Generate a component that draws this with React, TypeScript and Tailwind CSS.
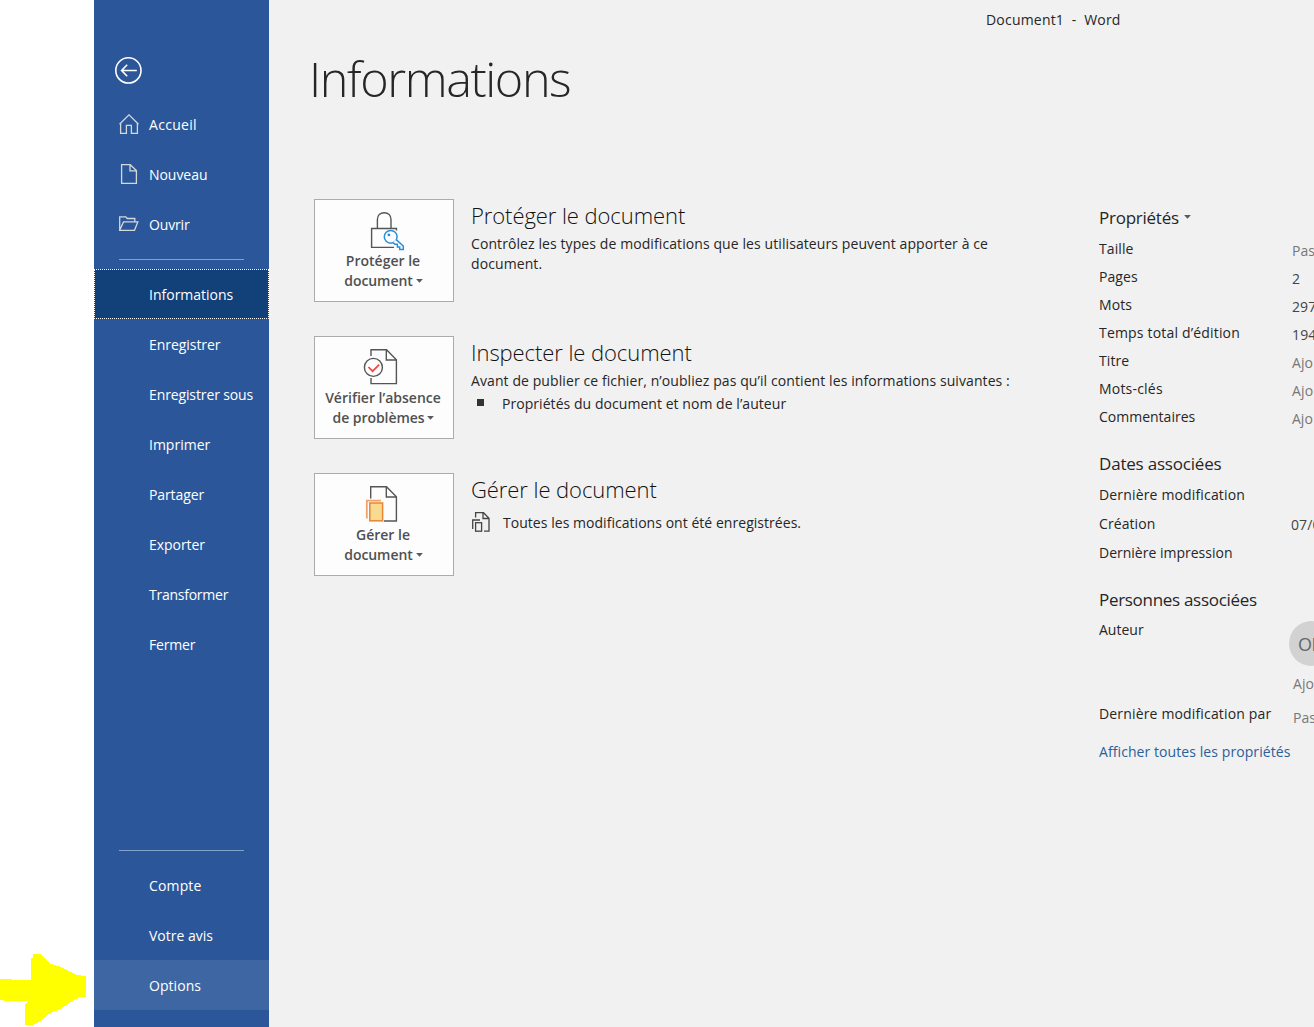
import type { ReactNode } from 'react';

function Caret({ className = '' }: { className?: string }) {
  return (
    <svg width="7" height="4" viewBox="0 0 7 4" className={`inline-block ${className}`}>
      <path d="M0.1 0.1H6.9L3.5 3.7Z" fill="#5a5a5a" />
    </svg>
  );
}

function BackIcon() {
  return (
    <svg width="28" height="28" viewBox="0 0 28 28" fill="none" stroke="#fff" strokeWidth="1.6">
      <circle cx="14.4" cy="14.4" r="12.6" />
      <path d="M22.8 14.5H7.4M13.2 8.7L7.6 14.5L13.2 20.3" />
    </svg>
  );
}

function HomeIcon() {
  return (
    <svg width="20" height="20" viewBox="0 0 20 20" fill="none" stroke="#d4d7dc" strokeWidth="1.3">
      <path d="M0.5 10.3L10 0.9L19.5 10.3M1.6 9.5V19.3H7.4V11.4H12.4V19.3H18.4V9.5" />
    </svg>
  );
}

function NewIcon() {
  return (
    <svg width="20" height="20" viewBox="0 0 20 20" fill="none" stroke="#d4d7dc" strokeWidth="1.3">
      <path d="M2.6 0.7H11.2L17.4 6.6V19.3H2.6ZM11 0.7V6.8H17.4" />
    </svg>
  );
}

function OpenIcon() {
  return (
    <svg width="20" height="20" viewBox="0 0 20 20" fill="none" stroke="#d4d7dc" strokeWidth="1.3">
      <path d="M0.7 16.3V2.8H6.8L8.2 4.5H15.8V7.8M0.7 16.3L4.5 7.9H18.8L15.5 16.3Z" />
    </svg>
  );
}

function LockIcon() {
  return (
    <svg width="44" height="41" viewBox="0 0 44 41" fill="none" stroke="#555" strokeWidth="1.4">
      <path d="M15.4 18V9.6C15.4 5.4 18.2 2.7 22.2 2.7S29 5.4 29 9.6V18" />
      <path d="M34.5 20.5V18.5H9.6V37.4H32" />
      <g stroke="#2a8fd4" strokeWidth="1.5">
        <circle cx="28.7" cy="26.8" r="6.4" fill="#fdfdfd" />
        <path d="M34.2 29.6L41.3 36V39.4H37.7V36.9H35.4V34.3H32.9L31 32.6" fill="#fdfdfd" />
      </g>
      <circle cx="26.9" cy="24.9" r="1.4" fill="#2a8fd4" stroke="none" />
    </svg>
  );
}

function CheckDocIcon() {
  return (
    <svg width="44" height="41" viewBox="0 0 44 41" fill="none" stroke="#555" strokeWidth="1.4">
      <path d="M9 9V2.8H24.5L34.4 12.8V36.6H9V31M24.3 2.8V13H34.4" />
      <circle cx="11.4" cy="20.4" r="9" fill="#fdfdfd" />
      <path d="M6.4 20L10.6 24.2L17.2 17.6" stroke="#f04747" strokeWidth="1.7" />
    </svg>
  );
}

function ManageDocIcon() {
  return (
    <svg width="44" height="41" viewBox="0 0 44 41" fill="none" stroke="#555" strokeWidth="1.4">
      <path d="M8.7 14.5V2.7H24.5L34.4 12.8V37H22M24.3 2.7V13H34.4" />
      <path d="M19 16.7H4.8V34.6" stroke="#f0a268" strokeWidth="1.8" />
      <rect x="7.8" y="19" width="12.8" height="17.8" fill="#f8da90" stroke="#ed8a3a" strokeWidth="1.6" />
    </svg>
  );
}

function SavedIcon() {
  return (
    <svg width="18" height="20" viewBox="0 0 18 20" fill="none" stroke="#444" strokeWidth="1.3">
      <path d="M3.6 5.5V0.7H11.5L17 6.2V19.2H12M11 0.7V6.5H17M8 8H0.7V17" />
      <rect x="3.6" y="10.7" width="6" height="8.5" />
    </svg>
  );
}

function YellowArrow() {
  return (
    <svg width="86" height="71" viewBox="0 372 258 213" preserveAspectRatio="none" shapeRendering="crispEdges">
      <path
        d="M0 447H36V450H94V384H99V372H122L152 401L190 414L230 435L258 438V500L235 502L215 515L180 537L150 550L118 575L100 584H75V522L84 514H12V510H0Z"
        fill="#ff0"
      />
    </svg>
  );
}

function NavItem({
  label,
  icon,
  className = '',
  tracking = 'tracking-[-0.05px]',
}: {
  label: string;
  icon?: ReactNode;
  className?: string;
  tracking?: string;
}) {
  return (
    <button className={`flex h-[50px] w-full shrink-0 items-center pl-[25px] text-left text-white ${className}`}>
      <span className="w-[30px] shrink-0 pb-0.5">{icon}</span>
      <span className={`whitespace-nowrap ${icon ? '' : 'pt-px'} ${tracking}`}>{label}</span>
    </button>
  );
}

function ActionButton({ icon, first, second }: { icon: ReactNode; first: string; second: string }) {
  return (
    <button className="flex h-[103px] w-[140px] shrink-0 flex-col items-center border border-[#ababab] bg-[#fdfdfd] pt-[10px] font-semibold leading-5 whitespace-nowrap text-[#505050]">
      {icon}
      <span className="-ml-0.5">{first}</span>
      <span className="-ml-px tracking-[-0.06px]">
        {second}
        <Caret className="ml-[3px] align-[3px]" />
      </span>
    </button>
  );
}

function Section({ button, title, children }: { button: ReactNode; title: string; children: ReactNode }) {
  return (
    <section className="flex h-[137px] gap-[17px]">
      {button}
      <div className="min-w-0 tracking-[0.09px]">
        <h2 className="h-[35px] text-[22px] leading-[32px] font-light tracking-[-0.07px] whitespace-nowrap text-[#111]">
          {title}
        </h2>
        {children}
      </div>
    </section>
  );
}

function Row({
  label,
  value,
  height,
  tone = 'text-[#444]',
}: {
  label: string;
  value?: string;
  height: string;
  tone?: string;
}) {
  return (
    <div className={`flex whitespace-nowrap ${height}`}>
      <span className="w-[193px] shrink-0">{label}</span>
      <span className={`pt-0.5 ${tone}`}>{value}</span>
    </div>
  );
}

export default function App() {
  return (
    <div className="flex h-[1027px] w-[1314px] overflow-hidden bg-white font-['Open_Sans','Noto_Sans',sans-serif] text-[14px] leading-5 text-[#262626]">
      <div className="flex w-[94px] shrink-0 flex-col justify-end pb-0.5">
        <YellowArrow />
      </div>

      <nav className="flex w-[175px] shrink-0 flex-col bg-[#2b579a]">
        <button className="mt-[56px] mb-4 ml-5 h-7 w-7">
          <BackIcon />
        </button>
        <NavItem label="Accueil" icon={<HomeIcon />} tracking="tracking-[0.3px]" />
        <NavItem label="Nouveau" icon={<NewIcon />} />
        <NavItem label="Ouvrir" icon={<OpenIcon />} tracking="tracking-[-0.15px]" />
        <div className="mx-[25px] mt-[9px] mb-[9px] h-px shrink-0 bg-[#7fa1cc]" />
        <NavItem
          label="Informations"
          tracking="tracking-normal"
          className="bg-[#124078] outline-1 -outline-offset-1 outline-dotted outline-white"
        />
        <NavItem label="Enregistrer" />
        <NavItem label="Enregistrer sous" tracking="tracking-[-0.12px]" />
        <NavItem label="Imprimer" tracking="tracking-normal" />
        <NavItem label="Partager" tracking="tracking-[-0.1px]" />
        <NavItem label="Exporter" />
        <NavItem label="Transformer" tracking="tracking-[-0.25px]" />
        <NavItem label="Fermer" tracking="tracking-[-0.2px]" />
        <div className="mx-[25px] mt-auto mb-[9px] h-px shrink-0 bg-[#7fa1cc]" />
        <NavItem label="Compte" tracking="tracking-[0.15px]" />
        <NavItem label="Votre avis" tracking="tracking-normal" />
        <NavItem label="Options" tracking="tracking-[0.05px]" className="mb-[17px] bg-[#3e66a3]" />
      </nav>

      <main className="flex min-w-0 flex-1 flex-col bg-[#f1f1f1]">
        <header className="flex h-10 shrink-0 pt-2.5 pl-[717px] tracking-[0.2px] whitespace-pre">
          Document1  -  Word
        </header>
        <h1 className="h-[159px] shrink-0 pl-[40px] text-[48.5px] leading-[76px] font-light tracking-[-1.4px]">
          Informations
        </h1>

        <div className="flex">
          <div className="w-[830px] shrink-0 pl-[45px]">
            <Section
              title="Protéger le document"
              button={<ActionButton icon={<LockIcon />} first="Protéger le" second="document" />}
            >
              <p className="whitespace-nowrap">
                Contrôlez les types de modifications que les utilisateurs peuvent apporter à ce
                <br />
                document.
              </p>
            </Section>
            <Section
              title="Inspecter le document"
              button={<ActionButton icon={<CheckDocIcon />} first="Vérifier l’absence" second="de problèmes" />}
            >
              <p className="whitespace-nowrap">
                Avant de publier ce fichier, n’oubliez pas qu’il contient les informations suivantes :
              </p>
              <div className="mt-[3px] flex items-center gap-[18px] pl-1.5 tracking-[0.05px]">
                <span className="mb-1 h-[7px] w-[7px] bg-[#333]" />
                <span>Propriétés du document et nom de l’auteur</span>
              </div>
            </Section>
            <Section
              title="Gérer le document"
              button={<ActionButton icon={<ManageDocIcon />} first="Gérer le" second="document" />}
            >
              <div className="mt-1 flex items-start gap-[13px] pl-px tracking-[0.04px]">
                <SavedIcon />
                <span className="pt-px">Toutes les modifications ont été enregistrées.</span>
              </div>
            </Section>
          </div>

          <aside className="w-[215px] shrink-0 overflow-hidden tracking-[0.08px]">
            <h3 className="h-10 pt-[9px] text-[17px] tracking-[-0.25px] whitespace-nowrap">
              Propriétés
              <Caret className="ml-[5px] align-[5px]" />
            </h3>
            <Row label="Taille" value="Pas" height="h-7" tone="text-[#777]" />
            <Row label="Pages" value="2" height="h-7" />
            <Row label="Mots" value="297" height="h-7" />
            <Row label="Temps total d’édition" value="194" height="h-7 tracking-[0.18px]" />
            <Row label="Titre" value="Ajo" height="h-7" tone="text-[#777]" />
            <Row label="Mots-clés" value="Ajo" height="h-7 tracking-[0.2px]" tone="text-[#777]" />
            <Row label="Commentaires" value="Ajo" height="h-7 tracking-normal" tone="text-[#777]" />

            <h3 className="mt-[19px] h-[31px] text-[17px] tracking-[-0.2px] whitespace-nowrap">Dates associées</h3>
            <Row label="Dernière modification" height="h-[29px] tracking-[0.16px]" />
            <Row label="Création" value="07/0" height="h-[29px]" tone="-ml-px -mt-px text-[#444]" />
            <Row label="Dernière impression" height="h-[29px] tracking-normal" />

            <h3 className="mt-[18px] h-[30px] text-[17px] tracking-[-0.3px] whitespace-nowrap">Personnes associées</h3>
            <div className="flex h-[84px]">
              <span className="w-[190px] shrink-0 tracking-normal">Auteur</span>
              <div className="shrink-0">
                <div className="mt-px flex h-[45px] w-[45px] items-center rounded-full bg-[#d2d2d2] pl-[9px] text-[18px] tracking-[-0.5px] text-[#666]">
                  OL
                </div>
                <p className="mt-2 pl-1 text-[#777]">Ajo</p>
              </div>
            </div>
            <div className="flex h-[38px] whitespace-nowrap">
              <span className="w-[194px] shrink-0 tracking-[0.16px]">Dernière modification par</span>
              <span className="pt-1 text-[#777]">Pas</span>
            </div>
            <a className="whitespace-nowrap text-[#2a6099]">Afficher toutes les propriétés</a>
          </aside>
        </div>
      </main>
    </div>
  );
}
